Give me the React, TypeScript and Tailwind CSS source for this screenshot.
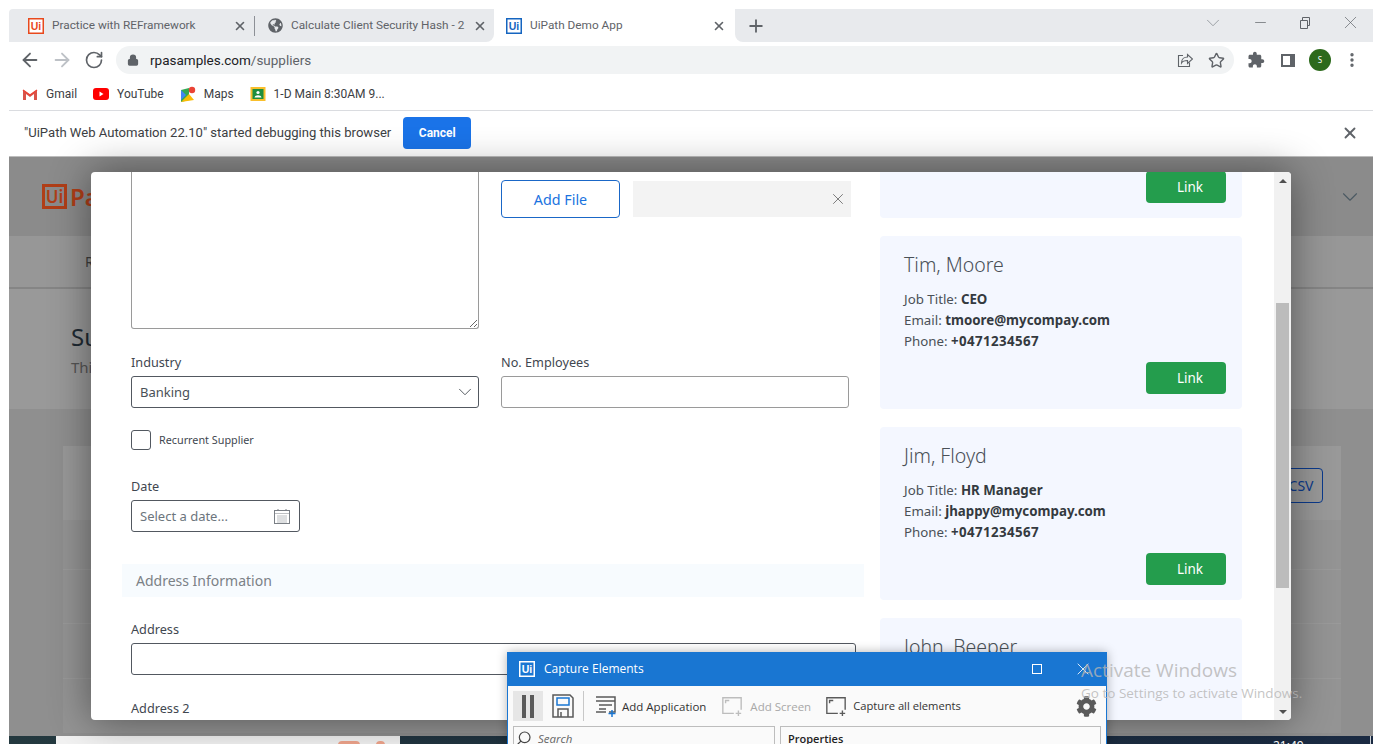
import React from "react";
import { ArrowLeft, ArrowRight, RotateCw, Lock, Star, X, Plus, ChevronDown, Minus, EllipsisVertical, Search } from "lucide-react";
import { FaCog, FaGlobeAmericas } from "react-icons/fa";

const UiLogo = ({ color, fill = "white", letters }: { color: string; fill?: string; letters?: string }) => (
  <svg width="16" height="16" viewBox="0 0 16 16" className="shrink-0">
    <rect x="0.75" y="0.75" width="14.5" height="14.5" fill={fill} stroke={color} strokeWidth="1.5" />
    <text x="8" y="12" textAnchor="middle" fontSize="10.5" fontWeight="700" fontFamily="Liberation Sans, sans-serif" fill={letters ?? color}>Ui</text>
  </svg>
);

function Tab({ label, icon, box }: { label: string; icon: React.ReactNode; box: string }) {
  return (
    <div className={`flex items-center h-[33px] ${box}`}>
      {icon}
      <span className="ml-[8px] flex-1 overflow-hidden whitespace-nowrap text-[11.8px] text-[#5f6368] font-['Roboto',sans-serif]">{label}</span>
      <X size={14} strokeWidth={2.8} className="text-[#5f6368] ml-[7px] mr-[1.5px] shrink-0" />
    </div>
  );
}

function Bookmark({ icon, label }: { icon: React.ReactNode; label: string }) {
  return (
    <div className="flex items-center gap-[8px] text-[12px] text-[#3c4043] font-['Roboto',sans-serif]">
      {icon}
      <span>{label}</span>
    </div>
  );
}

const LinkButton = () => (
  <div className="w-[80px] h-[32px] rounded bg-[#249d4d] text-white text-[13.5px] flex items-center justify-center pl-2 pt-px">Link</div>
);

function Contact({ name, title, email, phone }: { name: string; title: string; email: string; phone: string }) {
  return (
    <div className="h-[173px] rounded bg-[#f4f7ff] pl-6 pr-4 pt-[15px] shrink-0 flex flex-col">
      <div className="text-[19.5px] font-light leading-[28px] text-[#495057]">{name}</div>
      <div className="mt-[10px] text-[13.3px] leading-[21px] text-[#4a5056]">
        <div>Job Title: <b className="text-[#343a40]">{title}</b></div>
        <div>Email: <b className="text-[#343a40]">{email}</b></div>
        <div>Phone: <b className="text-[#343a40] tracking-[0.4px]">{phone}</b></div>
      </div>
      <div className="mt-[10px] flex justify-end">
        <LinkButton />
      </div>
    </div>
  );
}

export default function App() {
  return (
    <div className="relative w-[1382px] h-[744px] overflow-hidden bg-white px-[9px] pt-[9px] flex flex-col font-['Noto_Sans',sans-serif]">
      {/* tab strip */}
      <div className="h-[33px] flex shrink-0">
        <div className="flex items-center bg-[#e8eaed] rounded-tl-sm rounded-br-lg">
          <Tab box="w-[245px] pl-[19px] pr-[6px]" label="Practice with REFramework" icon={<UiLogo color="#e8491d" />} />
          <div className="w-px h-5 bg-[#8d9096]" />
          <Tab box="w-[239px] pl-[13px] pr-[6px]" label="Calculate Client Security Hash - 2" icon={<FaGlobeAmericas size={15} className="text-[#5f6368] shrink-0" />} />
        </div>
        <Tab box="w-[241px] pl-[12px] pr-[8px] bg-white" label="UiPath Demo App" icon={<UiLogo color="#1565c0" />} />
        <div className="flex-1 flex items-center bg-[#e8eaed] rounded-bl-lg">
          <Plus size={20} strokeWidth={2.2} className="text-[#5f6368] ml-[11px]" />
          <div className="flex-1" />
          <div className="flex items-center -mt-[6px]">
            <ChevronDown size={22} strokeWidth={0.8} className="text-[#80868b] mr-[28px]" />
            <Minus size={17} strokeWidth={1} className="text-[#5f6368] mr-[30px]" />
            <svg width="12" height="12" viewBox="0 0 12 12" fill="none" stroke="#5f6368" className="mr-[29px]"><path d="M1.500 3.500h7v8h-7zM3.500 3.500v-3h7v8h-2" /></svg>
            <X size={21} strokeWidth={0.8} className="text-[#5f6368] mr-[12px]" />
          </div>
        </div>
      </div>
      {/* toolbar */}
      <div className="h-[36px] flex items-center shrink-0 bg-white relative">
        <ArrowLeft size={22} strokeWidth={2} className="text-[#5f6368] ml-[10px]" />
        <ArrowRight size={22} strokeWidth={2} className="text-[#bdc1c6] ml-[10px]" />
        <RotateCw size={20} strokeWidth={2} className="text-[#5f6368] ml-[11px]" />
        <div className="ml-[12px] w-[1118px] h-[28px] rounded-full bg-[#f1f3f4] flex items-center pl-[11px] pr-[9px] text-[13.5px] font-['Roboto',sans-serif]">
          <Lock size={12} strokeWidth={2.5} fill="#5f6368" className="text-[#5f6368]" />
          <span className="ml-[11px] text-[#202124]">rpasamples.com<span className="text-[#5f6368]">/suppliers</span></span>
          <div className="flex-1" />
          <svg width="16" height="16" viewBox="0 0 16 16" fill="none" stroke="#5f6368" strokeWidth="1.1"><path d="M6 3.500H1.500v11h11V10.500" /><path d="M4.500 11c0-4 3-6 6-6V2.500l5 4.500-5 4.500V8.500c-3 0-5 .7-6 2.500z" /></svg>
          <Star size={17} strokeWidth={2} className="text-[#5f6368] ml-[15px]" />
        </div>
        <svg width="18" height="18" viewBox="0 0 24 24" fill="#5f6368" className="ml-[13px]"><path d="M20.500 11H19V7c0-1.100-.9-2-2-2h-4V3.500C13 2.120 11.880 1 10.500 1S8 2.120 8 3.500V5H4c-1.100 0-1.990.9-1.990 2v3.800H3.500c1.490 0 2.700 1.210 2.700 2.700s-1.210 2.700-2.700 2.700H2V20c0 1.100.9 2 2 2h3.800v-1.500c0-1.490 1.210-2.700 2.700-2.700 1.490 0 2.700 1.210 2.700 2.700V22H17c1.100 0 2-.9 2-2v-4h1.500c1.380 0 2.500-1.120 2.500-2.500S21.880 11 20.500 11z" /></svg>
        <div className="ml-[16px] w-[14px] h-[13px] border-2 border-[#5f6368] border-r-[5px]" />
        <div className="ml-[14px] w-[22px] h-[22px] rounded-full bg-[#2d6a1c] text-white text-[8px] flex items-center justify-center">S</div>
        <EllipsisVertical size={18} strokeWidth={2.5} className="text-[#5f6368] ml-[12px]" />
      </div>
      {/* bookmarks */}
      <div className="h-[33px] flex items-center gap-[16px] pl-[13px] border-b border-[#dadce0] shrink-0">
        <Bookmark label="Gmail" icon={<svg width="16" height="12" viewBox="0 0 16 12"><path d="M1 12V2l7 5 7-5v10h-3V6L8 9 4 6v6z" fill="#d9534a" /><path d="M1 2l7 5 7-5" fill="none" stroke="#ea4335" strokeWidth="1.5" /></svg>} />
        <Bookmark label="YouTube" icon={<svg width="16" height="12" viewBox="0 0 16 12"><rect width="16" height="12" rx="3" fill="#f00" /><path d="M6.500 3.500v5l4-2.500z" fill="#fff" /></svg>} />
        <Bookmark label="Maps" icon={<svg width="16" height="16" viewBox="0 0 16 16"><path d="M1 4l8-2v12l-8 2z" fill="#34a853" /><path d="M1 16l8-8 5 6z" fill="#fbbc04" /><path d="M1 4l5 5-5 5z" fill="#4285f4" /><circle cx="12" cy="4" r="3.2" fill="#ea4335" /></svg>} />
        <Bookmark label="1-D Main 8:30AM 9..." icon={<svg width="16" height="16" viewBox="0 0 16 16"><rect x="0.5" y="1" width="15" height="14" fill="#f9bf2c" /><rect x="2.5" y="3" width="11" height="10" fill="#1e8e3e" /><circle cx="8" cy="6.500" r="1.6" fill="#fff" /><path d="M4.500 11.500c.5-3 6.500-3 7 0z" fill="#fff" /></svg>} />
      </div>
      {/* debugging bar */}
      <div className="h-[45px] flex items-center shrink-0 pl-[15px] pb-[2px] text-[13.08px] text-[#3c4043] font-['Roboto',sans-serif]">
        <span>"UiPath Web Automation 22.10" started debugging this browser</span>
        <div className="ml-[12px] w-[68px] h-[32px] rounded bg-[#1a73e8] text-white text-[12px] font-bold flex items-center justify-center">Cancel</div>
        <div className="flex-1" />
        <X size={18} strokeWidth={2.5} className="text-[#5f6368] mr-[14px]" />
      </div>
      {/* dimmed page */}
      <div className="flex-1 min-h-0 bg-[#8f8f8f] flex flex-col border-t border-[#bdbdbd]">
        <div className="h-[79px] bg-[#8b8b8b] flex items-center justify-between pl-[33px] pr-[10px] shrink-0">
          <div className="flex items-center text-[#b03e17] font-semibold text-[24px]">
            <span className="w-[25px] h-[25px] border-[3px] border-[#b03e17] text-[17px] flex items-center justify-center">Ui</span>
            <span className="ml-[3px]">Path</span>
          </div>
          <ChevronDown size={26} strokeWidth={1} className="text-[#4b5963]" />
        </div>
        <div className="h-[53px] bg-[#979797] border-b-2 border-[#858585] pl-[76px] flex items-center text-[14px] text-[#3f3f3f] shrink-0">Reports</div>
        <div className="h-[120px] bg-[#999999] pl-[62px] pt-[32px] shrink-0">
          <div className="text-[24px] leading-[32px] text-[#1f2a33]">Suppliers</div>
          <div className="pt-[2px] text-[15px] leading-[24px] text-[#555]">This is the list of suppliers</div>
        </div>
        <div className="mt-[37px] ml-[54px] mr-[32px] flex flex-col">
          <div className="h-[74px] bg-[#999999] shrink-0 flex items-start justify-end pt-[22px] pr-[18px]">
            <div className="w-[64px] h-[35px] rounded border border-[#0b3a8c] text-[#0b3a8c] text-[14px] flex items-center justify-center pl-5">CSV</div>
          </div>
          <div className="h-[50px] border-b border-[#9a9a9a] bg-[#949494]" />
          <div className="h-[54px] border-b border-[#9a9a9a] bg-[#949494]" />
          <div className="h-[55px] border-b border-[#9a9a9a] bg-[#949494]" />
          <div className="h-[54px] bg-[#949494]" />
        </div>
      </div>
      {/* taskbar */}
      <div className="h-[8px] bg-gradient-to-r from-[#24393f] to-[#1a2a42] shrink-0 flex overflow-hidden">
        <div className="ml-[47px] w-[344px] bg-[#f2f2f2] flex items-start pl-[282px] gap-[16px] pt-[5px]">
          <div className="w-[22px] h-[8px] rounded-full bg-[#f0a58c]" />
          <div className="w-[9px] h-[8px] rounded-full bg-[#f0a58c]" />
        </div>
        <div className="ml-auto mr-[71px] w-[26px] pt-[3px] text-[12px] leading-[14px] text-white">21:49</div>
        <div className="w-px bg-[#cfd4da] mr-[2px]" />
      </div>

      {/* modal */}
      <div className="absolute left-[91px] top-[172px] w-[1200px] h-[548px] bg-white rounded-sm shadow-[0_0_40px_rgba(0,0,0,0.45)] overflow-hidden flex">
        <div className="w-[773px] shrink-0 pl-[40px] flex flex-col">
          <div className="flex gap-[22px] h-[157px] shrink-0">
            <div className="relative w-[348px] h-[157px] border border-[#9a9a9a] border-t-0 rounded-b-[3px]">
              <svg width="9" height="9" viewBox="0 0 9 9" className="absolute right-0 bottom-0" stroke="#555" strokeWidth="0.9"><path d="M1 8L8 1M5 8L8 5" /></svg>
            </div>
            <div className="flex gap-[13px] pt-[8px] items-start">
              <div className="w-[119px] h-[38px] pt-px rounded border border-[#1a67c7] text-[#1a73e0] text-[14.3px] flex items-center justify-center">Add File</div>
              <div className="w-[218px] h-[36px] mt-px bg-[#f3f3f3] flex items-center justify-end pr-[4px]">
                <X size={18} strokeWidth={1} className="text-[#555]" />
              </div>
            </div>
          </div>
          <div className="flex gap-[22px] mt-[23px]">
            <div className="w-[348px]">
              <div className="text-[12.7px] leading-[20px] text-[#3f4750] mb-[4px]">Industry</div>
              <div className="h-[32px] border border-[#525860] rounded-[3px] flex items-center justify-between pl-[8px] pr-[2px] text-[13px] text-[#495057]">
                <span className="pt-px">Banking</span>
                <ChevronDown size={22} strokeWidth={1} className="text-[#495057]" />
              </div>
            </div>
            <div className="w-[348px]">
              <div className="text-[12.7px] leading-[20px] text-[#3f4750] mb-[4px]">No. Employees</div>
              <div className="h-[32px] border border-[#9a9a9a] rounded-[3px]" />
            </div>
          </div>
          <div className="flex items-center mt-[22px] h-[20px]">
            <div className="w-[20px] h-[20px] border border-[#525860] rounded-[3px]" />
            <span className="ml-[8px] text-[10.8px] text-[#3f4750]">Recurrent Supplier</span>
          </div>
          <div className="mt-[26px] text-[12.7px] leading-[20px] text-[#3f4750] mb-[4px]">Date</div>
          <div className="w-[169px] h-[32px] border border-[#525860] rounded-[3px] flex items-center justify-between pl-[8px] pr-[9px] text-[13px] text-[#6c757d]">
            <span className="pt-[2px]">Select a date...</span>
            <svg width="16" height="16" viewBox="0 0 16 16" fill="none" stroke="#7a7f85" strokeWidth="1"><rect x="0.5" y="2.5" width="15" height="13" /><path d="M0.5 5.500h15M3.500 8h9M3.500 10h9M3.500 12h9M3.500 14h9" strokeDasharray="1 1" /><path d="M4 1v2M12 1v2" /></svg>
          </div>
          <div className="mt-[32px] -ml-[9px] w-[742px] h-[33px] bg-[#f7fbfe] pl-[14px] flex items-center text-[14px] text-[#7b8186] shrink-0">Address Information</div>
          <div className="mt-[22px] text-[12.7px] leading-[20px] text-[#3f4750] mb-[4px]">Address</div>
          <div className="w-[725px] h-[32px] border border-[#525860] rounded-[3px] shrink-0" />
          <div className="mt-[23px] text-[12.7px] leading-[20px] text-[#3f4750]">Address 2</div>
        </div>
        {/* contact cards */}
        <div className="w-[362px] ml-[16px] shrink-0 flex flex-col gap-[18px]">
          <div className="h-[46px] rounded-b bg-[#f4f7ff] shrink-0 flex justify-end pr-4">
            <div className="-mt-px"><LinkButton /></div>
          </div>
          <Contact name="Tim, Moore" title="CEO" email="tmoore@mycompay.com" phone="+0471234567" />
          <Contact name="Jim, Floyd" title="HR Manager" email="jhappy@mycompay.com" phone="+0471234567" />
          <Contact name="John, Beeper" title="" email="" phone="" />
        </div>
        <div className="flex-1" />
        {/* scrollbar */}
        <div className="w-[17px] bg-[#f1f1f1] flex flex-col items-center">
          <div className="h-[17px] flex items-center justify-center shrink-0"><div className="border-x-[4px] border-x-transparent border-b-[4px] border-b-[#505050]" /></div>
          <div className="mt-[114px] w-[13px] h-[285px] bg-[#bcbcbc]" />
          <div className="flex-1" />
          <div className="h-[17px] flex items-center justify-center shrink-0"><div className="border-x-[4px] border-x-transparent border-t-[4px] border-t-[#505050]" /></div>
        </div>
      </div>

      {/* Capture Elements window */}
      <div className="absolute left-[507px] top-[652px] w-[600px] h-[92px] bg-[#fafafa] border-x border-[#1976d2] flex flex-col font-['Open_Sans',sans-serif] shadow-[0_0_10px_rgba(0,0,0,0.3)]">
        <div className="h-[34px] bg-[#1976d2] shrink-0 flex items-center pl-[11px] text-white">
          <UiLogo color="#ffffff" fill="#1976d2" letters="#ffffff" />
          <span className="ml-[9px] text-[12px]">Capture Elements</span>
          <div className="flex-1" />
          <div className="w-[10px] h-[10px] border border-white mr-[31px]" />
          <X size={20} strokeWidth={1} className="mr-[13px]" />
        </div>
        <div className="h-[40px] shrink-0 flex items-center pl-[5px] text-[11.5px] text-[#333]">
          <div className="w-[30px] h-[30px] bg-[#e6e6e6] flex items-center justify-center gap-[4px]">
            <div className="w-[4px] h-[23px] bg-[#5a5a5a]" />
            <div className="w-[4px] h-[23px] bg-[#5a5a5a]" />
          </div>
          <svg width="22" height="24" viewBox="0 0 22 24" fill="none" stroke="#5a5a5a" strokeWidth="1.5" className="ml-[9px]"><path d="M1 1h17l3 3v19H1z" /><rect x="5" y="4" width="12" height="7" stroke="#1976d2" /><path d="M6 23v-8h10v8M9 18v5" /></svg>
          <div className="w-px h-[30px] bg-[#c8c8c8] ml-[9px]" />
          <svg width="24" height="24" viewBox="0 0 24 24" fill="none" stroke="#5a5a5a" strokeWidth="1.500" className="ml-[10px]"><path d="M2 3h19v15h-6M12 18H2zM2 7h19M5 11h13M5 15h7" /><path d="M18 16v7M14.500 19.500h7" stroke="#1976d2" /></svg>
          <span className="ml-[4px] pt-px">Add Application</span>
          <svg width="22" height="24" viewBox="0 0 24 24" fill="none" stroke="#bdbdbd" strokeWidth="1.500" className="ml-[15px]"><path d="M14 20H2V3h20v13M5 9V6h4M19 17v6M16 20h6" /></svg>
          <span className="ml-[7px] pt-px text-[#a8a8a8]">Add Screen</span>
          <svg width="22" height="24" viewBox="0 0 24 24" fill="none" stroke="#5a5a5a" strokeWidth="1.500" className="ml-[14px]"><path d="M14 20H2V3h20v13M5 9V6h4M19 17v6M16 20h6" /></svg>
          <span className="ml-[6px] pt-px text-[11.2px]">Capture all elements</span>
          <div className="flex-1" />
          <FaCog size={21} className="text-[#5a5a5a] mr-[9px]" />
        </div>
        <div className="flex-1 flex gap-[5px] px-[5px]">
          <div className="w-[262px] border border-[#bdbdbd] border-b-0 flex items-start pt-[3px] pl-[2px] text-[11.5px] italic text-[#666]">
            <Search size={16} strokeWidth={1.8} className="-scale-x-100 text-[#444]" />
            <span className="ml-[6px] leading-[18px]">Search</span>
          </div>
          <div className="flex-1 border border-[#bdbdbd] border-b-0 pl-[7px] pt-[3px] text-[11px] font-semibold text-[#222] leading-[18px]">Properties</div>
        </div>
      </div>

      {/* Windows watermark */}
      <div className="absolute left-[1081px] top-[658px] text-[#b4b4b4]/80 pointer-events-none font-['Open_Sans',sans-serif]">
        <div className="text-[19px] leading-[24px]">Activate Windows</div>
        <div className="text-[13.5px] leading-[22px] whitespace-nowrap">Go to Settings to activate Windows.</div>
      </div>
    </div>
  );
}
